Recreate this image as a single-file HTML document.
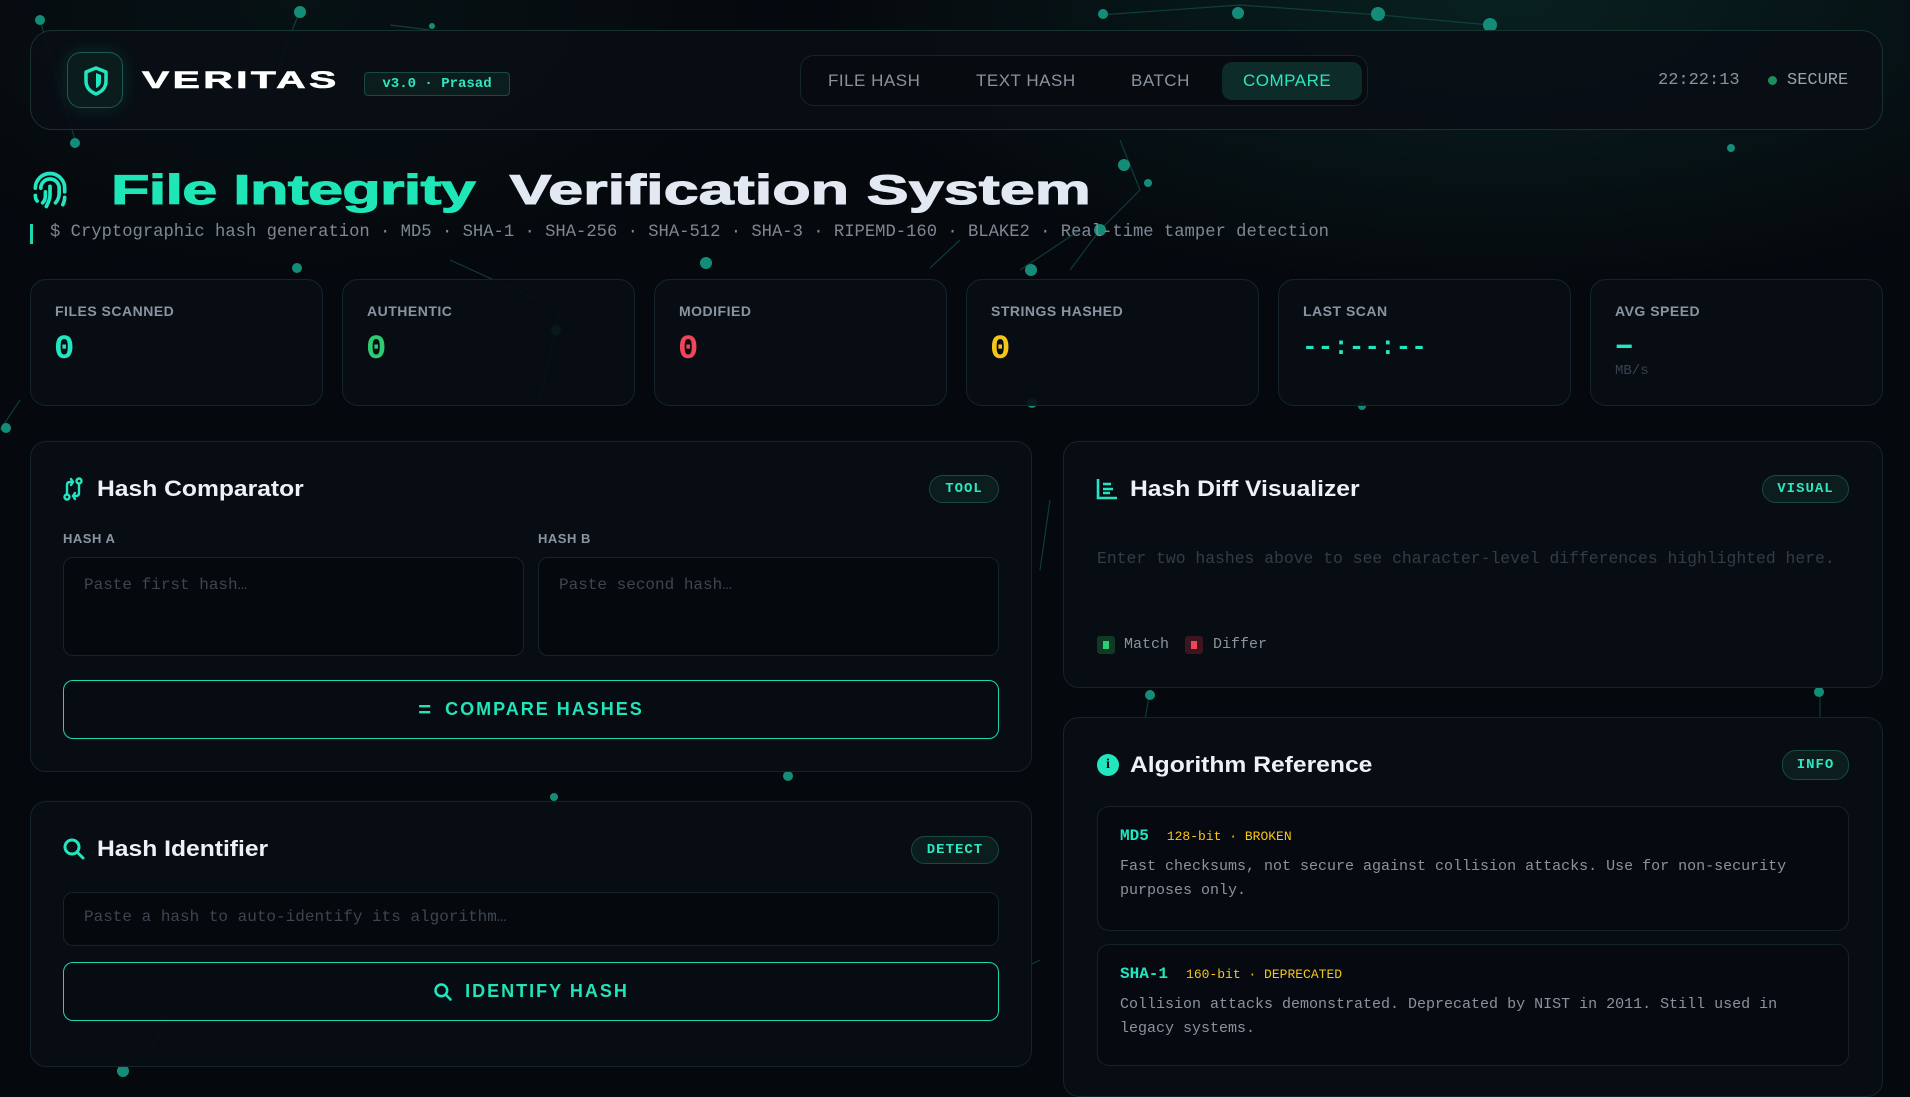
<!DOCTYPE html>
<html><head><meta charset="utf-8"><style>
*{box-sizing:border-box;margin:0;padding:0}
body{width:1910px;height:1077px;overflow:hidden;background:#05080d;font-family:"Liberation Sans",sans-serif;position:relative;color:#e6edf3}
.bg{position:absolute;inset:0;background:radial-gradient(ellipse 700px 300px at 1500px 0px,rgba(20,120,100,.22),transparent),radial-gradient(ellipse 500px 300px at 300px 0px,rgba(20,90,80,.12),transparent)}
.abs{position:absolute}
.box{position:absolute;background:rgba(9,14,21,.92);border:1px solid #15242c;border-radius:16px}
.mono{font-family:"Liberation Mono",monospace}
.badge{position:absolute;border:1px solid #174a44;background:#0b1d1d;color:#2ee6c0;font-family:"Liberation Mono",monospace;font-size:14px;font-weight:bold;border-radius:14px;display:flex;align-items:center;justify-content:center;letter-spacing:1px}
.lbl{font-size:14px;font-weight:bold;color:#8a95a2;letter-spacing:.5px}
.val{font-family:"Liberation Mono",monospace;font-weight:bold;font-size:34px}
.ttl{font-size:22px;font-weight:bold;color:#eef2f6;position:absolute;white-space:nowrap;transform:scaleX(1.12);transform-origin:left}
.inp{position:absolute;background:#05080c;border:1px solid #15232b;border-radius:10px;color:#3c4652;font-family:"Liberation Mono",monospace;font-size:16px;padding:18px 20px}
.btn{position:absolute;border:1.5px solid #1fd6ae;border-radius:10px;color:#22e3ba;font-weight:bold;font-size:18px;letter-spacing:2px;display:flex;align-items:center;justify-content:center;gap:12px;background:#070c12}
.card{position:absolute;left:1097px;width:752px;border:1px solid #15222a;border-radius:12px;background:#060a10;padding:20px 22px}
</style></head><body>
<div class="bg"></div>
<svg class="abs" style="left:0;top:0" width="1910" height="1077">
<g stroke="#0f4a44" stroke-width="1.2" fill="none" opacity=".8">
<path d="M40 20 L75 140 M300 10 L270 90 M430 30 L390 25 M1100 15 L1240 5 L1380 15 L1490 25 M1120 140 L1140 190 L1100 230 M1100 230 L1070 270 M1080 230 L1020 270 M960 240 L930 268 M450 260 L560 310 M20 400 L0 430 M560 310 L540 400 M1050 500 L1040 570 M1150 690 L1145 720 M1820 690 L1820 720 M150 1050 L180 1000 M1040 960 L1020 970"/>
</g>
<g fill="#148d78">
<circle cx="40" cy="20" r="5"/><circle cx="300" cy="12" r="6"/><circle cx="432" cy="26" r="3"/><circle cx="75" cy="143" r="5"/>
<circle cx="1103" cy="14" r="5"/><circle cx="1238" cy="13" r="6"/><circle cx="1378" cy="14" r="7"/><circle cx="1490" cy="25" r="7"/>
<circle cx="1124" cy="165" r="6"/><circle cx="1148" cy="183" r="4"/><circle cx="1100" cy="230" r="6"/><circle cx="1031" cy="270" r="6"/><circle cx="1032" cy="403" r="5"/>
<circle cx="1731" cy="148" r="4"/><circle cx="706" cy="263" r="6"/><circle cx="297" cy="268" r="5"/><circle cx="556" cy="330" r="5"/><circle cx="6" cy="428" r="5"/>
<circle cx="1150" cy="695" r="5"/><circle cx="1819" cy="692" r="5"/><circle cx="788" cy="776" r="5"/><circle cx="554" cy="797" r="4"/><circle cx="123" cy="1071" r="6"/><circle cx="1362" cy="406" r="4"/>
</g></svg>

<!-- header -->
<div class="box" style="left:30px;top:30px;width:1853px;height:100px;border-radius:22px;border-color:#163330"></div>
<div class="abs" style="left:67px;top:52px;width:56px;height:56px;border-radius:14px;border:1px solid #1b5a50;background:#0b1c1d;box-shadow:0 0 18px rgba(30,220,180,.15)">
<svg width="56" height="56" viewBox="0 0 56 56"><path d="M28 15 L38 19 V28 C38 35 33 39 28 41 C23 39 18 35 18 28 V19 Z" fill="none" stroke="#22e6bf" stroke-width="3.5" stroke-linejoin="round"/><path d="M28 20 L33 22 V28 C33 32 31 34 28 35 Z" fill="#22e6bf"/></svg></div>
<div class="abs" style="left:142px;top:67px;font-size:24px;font-weight:900;letter-spacing:2px;color:#fff;transform:scaleX(1.7);transform-origin:left;-webkit-text-stroke:.6px #fff">VERITAS</div>
<div class="badge" style="left:364px;top:72px;width:146px;height:24px;border-radius:4px;font-size:14px;letter-spacing:0">v3.0 · Prasad</div>
<div class="abs" style="left:800px;top:55px;width:568px;height:51px;border:1px solid #15232a;border-radius:14px;background:#070b10"></div>
<div class="abs" style="left:1222px;top:62px;width:140px;height:38px;border-radius:10px;background:#0d2b28"></div>
<div class="abs" style="top:71px;left:0;font-size:17px;color:#8a939d;letter-spacing:.5px">
<span class="abs" style="left:828px;white-space:nowrap">FILE HASH</span><span class="abs" style="left:976px;white-space:nowrap">TEXT HASH</span><span class="abs" style="left:1131px">BATCH</span><span class="abs" style="left:1243px;color:#2ee6c0">COMPARE</span></div>
<div class="abs mono" style="left:1658px;top:71px;font-size:17px;color:#8a939d">22:22:13</div>
<div class="abs" style="left:1768px;top:76px;width:9px;height:9px;border-radius:50%;background:#1c8f5c"></div>
<div class="abs mono" style="left:1787px;top:71px;font-size:17px;color:#9aa3ad">SECURE</div>

<!-- title -->
<svg class="abs" style="left:28px;top:168px" width="44" height="44" viewBox="0 0 24 24" fill="none" stroke="#22e6bf" stroke-width="2" stroke-linecap="round"><path d="M4 11a8 8 0 0 1 16 0v2"/><path d="M7 11a5 5 0 0 1 10 0v3c0 2-1 4-2 5"/><path d="M12 10v5c0 2-1 4-2 6"/><path d="M9.5 13v2c0 1.5-.5 3-1.5 4"/><path d="M4 15c0 1 0 2 1 3"/><path d="M20 16c0 1.5-.5 3-1 4"/></svg>
<div class="abs" style="left:111px;top:166px;font-size:42px;font-weight:900;letter-spacing:-.5px;white-space:nowrap;transform:scaleX(1.5);transform-origin:left"><span style="color:#1fe6b6;-webkit-text-stroke:1px #1fe6b6">File Integrity</span><span style="display:inline-block;width:23px"></span><span style="color:#e3e9f2;-webkit-text-stroke:1px #e3e9f2;letter-spacing:0">Verification System</span></div>
<div class="abs" style="left:30px;top:224px;width:3px;height:20px;background:#1fd6ae"></div>
<div class="abs mono" style="left:50px;top:223px;font-size:17.2px;color:#7e8894;white-space:nowrap">$ Cryptographic hash generation · MD5 · SHA-1 · SHA-256 · SHA-512 · SHA-3 · RIPEMD-160 · BLAKE2 · Real-time tamper detection</div>

<!-- stats -->
<div class="box" style="left:30px;top:279px;width:293px;height:127px"></div>
<div class="box" style="left:342px;top:279px;width:293px;height:127px"></div>
<div class="box" style="left:654px;top:279px;width:293px;height:127px"></div>
<div class="box" style="left:966px;top:279px;width:293px;height:127px"></div>
<div class="box" style="left:1278px;top:279px;width:293px;height:127px"></div>
<div class="box" style="left:1590px;top:279px;width:293px;height:127px"></div>
<div class="abs lbl" style="left:55px;top:303px">FILES SCANNED</div><div class="abs val" style="left:54px;top:331px;color:#22e6bf">0</div>
<div class="abs lbl" style="left:367px;top:303px">AUTHENTIC</div><div class="abs val" style="left:366px;top:331px;color:#2ecc71">0</div>
<div class="abs lbl" style="left:679px;top:303px">MODIFIED</div><div class="abs val" style="left:678px;top:331px;color:#f04458">0</div>
<div class="abs lbl" style="left:991px;top:303px">STRINGS HASHED</div><div class="abs val" style="left:990px;top:331px;color:#f5c518">0</div>
<div class="abs lbl" style="left:1303px;top:303px">LAST SCAN</div><div class="abs val" style="left:1302px;top:332px;color:#22e6bf;font-size:26px">--:--:--</div>
<div class="abs lbl" style="left:1615px;top:303px">AVG SPEED</div><div class="abs val" style="left:1614px;top:328px;color:#22e6bf">–</div>
<div class="abs mono" style="left:1615px;top:363px;font-size:14px;color:#3a434d">MB/s</div>

<!-- comparator -->
<div class="box" style="left:30px;top:441px;width:1002px;height:331px"></div>
<svg class="abs" style="left:62px;top:477px" width="22" height="24" viewBox="0 0 22 24" fill="none" stroke="#22e6bf" stroke-width="2.4" stroke-linecap="round"><circle cx="17" cy="4" r="2.5"/><circle cx="5" cy="20" r="2.5"/><path d="M5 17V8c0-2 1-3 3-3h3M9 2l2 3-2 3"/><path d="M17 7v9c0 2-1 3-3 3h-3M13 22l-2-3 2-3"/></svg>
<div class="ttl" style="left:97px;top:476px">Hash Comparator</div>
<div class="badge" style="left:929px;top:475px;width:70px;height:28px">TOOL</div>
<div class="abs lbl" style="left:63px;top:531px;font-size:13px">HASH A</div>
<div class="abs lbl" style="left:538px;top:531px;font-size:13px">HASH B</div>
<div class="inp" style="left:63px;top:557px;width:461px;height:99px">Paste first hash…</div>
<div class="inp" style="left:538px;top:557px;width:461px;height:99px">Paste second hash…</div>
<div class="btn" style="left:63px;top:680px;width:936px;height:59px"><span style="font-size:22px">=</span>COMPARE HASHES</div>

<!-- identifier -->
<div class="box" style="left:30px;top:801px;width:1002px;height:266px"></div>
<svg class="abs" style="left:62px;top:837px" width="24" height="24" viewBox="0 0 24 24" fill="none" stroke="#22e6bf" stroke-width="3" stroke-linecap="round"><circle cx="10" cy="10" r="7"/><path d="M15 15l6 6"/></svg>
<div class="ttl" style="left:97px;top:836px">Hash Identifier</div>
<div class="badge" style="left:911px;top:836px;width:88px;height:28px">DETECT</div>
<div class="inp" style="left:63px;top:892px;width:936px;height:54px;padding:15px 20px">Paste a hash to auto-identify its algorithm…</div>
<div class="btn" style="left:63px;top:962px;width:936px;height:59px"><svg width="20" height="20" viewBox="0 0 24 24" fill="none" stroke="#22e6bf" stroke-width="3" stroke-linecap="round"><circle cx="10" cy="10" r="7"/><path d="M15 15l6 6"/></svg>IDENTIFY HASH</div>

<!-- diff -->
<div class="box" style="left:1063px;top:441px;width:820px;height:247px"></div>
<svg class="abs" style="left:1096px;top:478px" width="22" height="22" viewBox="0 0 22 22" fill="none" stroke="#22e6bf" stroke-width="2.6"><path d="M2 1v19h19"/><path d="M7 6h8M7 11h10M7 15h7"/></svg>
<div class="ttl" style="left:1130px;top:476px">Hash Diff Visualizer</div>
<div class="badge" style="left:1762px;top:475px;width:87px;height:28px">VISUAL</div>
<div class="abs mono" style="left:1097px;top:549px;font-size:16.4px;color:#333c47;white-space:nowrap">Enter two hashes above to see character-level differences highlighted here.</div>
<div class="abs" style="left:1097px;top:636px;width:18px;height:18px;background:#0f3a26;border-radius:3px"><div style="margin:5px 6px;width:6px;height:8px;background:#2ecc71"></div></div>
<div class="abs mono" style="left:1124px;top:636px;font-size:15px;color:#8a939d">Match</div>
<div class="abs" style="left:1185px;top:636px;width:18px;height:18px;background:#3c1520;border-radius:3px"><div style="margin:5px 6px;width:6px;height:8px;background:#f04458"></div></div>
<div class="abs mono" style="left:1213px;top:636px;font-size:15px;color:#8a939d">Differ</div>

<!-- algorithm -->
<div class="box" style="left:1063px;top:717px;width:820px;height:380px"></div>
<div class="abs" style="left:1097px;top:754px;width:22px;height:22px;border-radius:50%;background:#22e6bf;color:#05080d;font-weight:bold;font-size:14px;text-align:center;line-height:22px;font-family:'Liberation Serif',serif">i</div>
<div class="ttl" style="left:1130px;top:752px">Algorithm Reference</div>
<div class="badge" style="left:1782px;top:750px;width:67px;height:30px">INFO</div>
<div class="card" style="top:806px;height:125px">
<div class="mono" style="font-size:15px"><b style="color:#22e6bf;font-size:16px">MD5</b>&nbsp; <span style="color:#f5c518;font-size:13px">128-bit · BROKEN</span></div>
<div class="mono" style="margin-top:10px;font-size:15px;line-height:24px;color:#8a939d">Fast checksums, not secure against collision attacks. Use for non-security purposes only.</div></div>
<div class="card" style="top:944px;height:122px">
<div class="mono" style="font-size:15px"><b style="color:#22e6bf;font-size:16px">SHA-1</b>&nbsp; <span style="color:#f5c518;font-size:13px">160-bit · DEPRECATED</span></div>
<div class="mono" style="margin-top:10px;font-size:15px;line-height:24px;color:#8a939d">Collision attacks demonstrated. Deprecated by NIST in 2011. Still used in legacy systems.</div></div>
</body></html>
